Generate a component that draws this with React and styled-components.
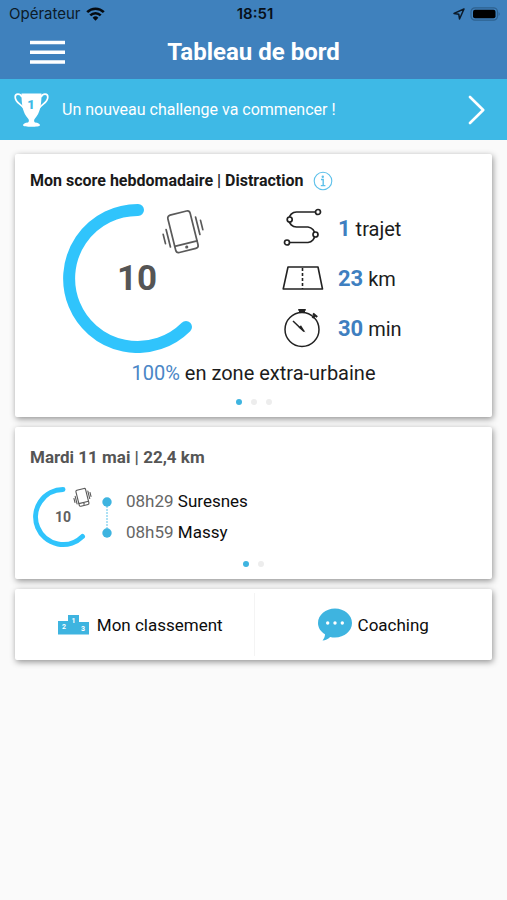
import React from "react";
import styled, { createGlobalStyle } from "styled-components";

const GlobalStyle = createGlobalStyle`
  *, *::before, *::after { box-sizing: border-box; }
  body {
    margin: 0;
    background: #fafafa;
    color: #1c1c1c;
    font-family: Roboto, "Liberation Sans", sans-serif;
  }
  button { font: inherit; color: inherit; border: 0; padding: 0; background: none; cursor: pointer; }
  h1, h2, p, ul, ol, dl, dd { margin: 0; padding: 0; }
  ul, ol { list-style: none; }
  svg { display: block; flex: none; }
`;

const Top = styled.header`
  background: #3f81bd;
`;

const StatusBar = styled.div`
  display: grid;
  grid-template-columns: 1fr auto 1fr;
  align-items: center;
  height: 27px;
  padding: 0 6px 0 9px;
  font-family: Inter, "Liberation Sans", sans-serif;
  font-size: 15px;
  color: #0c1a28;
`;

const StatusGroup = styled.div`
  display: flex;
  align-items: center;
  justify-content: ${(p) => p.$justify || "flex-start"};
  gap: 5px;
`;

const Clock = styled.time`
  font-weight: 600;
  color: #071019;
`;

const TitleBar = styled.div`
  display: grid;
  grid-template-columns: 36px 1fr 36px;
  align-items: center;
  height: 52px;
  padding: 0 29px;
  padding-bottom: 3px;
`;

const PageTitle = styled.h1`
  text-align: center;
  color: #fff;
  font-size: 24px;
  line-height: 28px;
  font-weight: 700;
`;

const Banner = styled.button`
  display: flex;
  align-items: center;
  gap: 13px;
  width: 100%;
  height: 61px;
  padding: 0 22px 0 14px;
  background: #3eb9e6;
  color: #fff;
  text-align: left;
  font-size: 16px;
`;

const BannerText = styled.span`
  flex: 1;
`;

const Main = styled.main`
  display: flex;
  flex-direction: column;
  gap: 10px;
  padding: 14px 15px;
`;

const Card = styled.section`
  background: #fff;
  border-radius: 2px;
  box-shadow: 1px 2px 6px rgba(0, 0, 0, 0.42);
  padding: ${(p) => p.$padding || "0"};
`;

const CardHeader = styled.div`
  display: flex;
  align-items: center;
  gap: 9px;
`;

const CardTitle = styled.h2`
  font-size: ${(p) => p.$size}px;
  line-height: 24px;
  font-weight: 700;
  color: ${(p) => p.$color};
`;

const Score = styled.div`
  display: grid;
  grid-template-columns: 205px 1fr;
  align-items: center;
  column-gap: 47px;
  margin-top: 10px;
`;

const ScoreGauge = styled.div`
  display: flex;
  align-items: flex-start;
  padding-left: 32px;
`;

const Stats = styled.ul`
  display: flex;
  flex-direction: column;
  gap: 6px;
`;

const Stat = styled.li`
  display: flex;
  align-items: center;
  gap: 14px;
  height: 44px;
  font-size: 20px;
`;

const StatValue = styled.strong`
  color: #3f7fc0;
  font-size: 22px;
  font-weight: 700;
`;

const Zone = styled.p`
  margin-top: 8px;
  text-align: center;
  font-size: 20px;
  line-height: 24px;
`;

const ZoneShare = styled.span`
  color: #4a86c6;
`;

const Pager = styled.div`
  display: flex;
  justify-content: center;
  gap: 9px;
  margin-top: ${(p) => p.$top}px;
`;

const PagerDot = styled.button`
  width: 6px;
  height: 6px;
  border-radius: 50%;
  background: ${(p) => (p.$active ? "#3eb4e0" : "#ededed")};
`;

const Trip = styled.div`
  display: flex;
  align-items: center;
  margin-top: 17px;
  padding-left: 3px;
`;

const Stops = styled.div`
  display: flex;
  align-items: center;
  gap: 14px;
  margin-left: 9px;
`;

const StopList = styled.ol`
  font-size: 17px;
  line-height: 31px;
  color: #0c0c0c;
`;

const StopTime = styled.time`
  color: #666;
`;

const Actions = styled.nav`
  display: grid;
  grid-template-columns: 1fr 1fr;
  padding: 4px 0;
`;

const Action = styled.button`
  display: flex;
  align-items: center;
  justify-content: center;
  gap: ${(p) => p.$gap}px;
  height: 63px;
  padding-left: ${(p) => p.$indent || 0}px;
  font-size: 17px;
  color: #0c0c0c;
  & + & { border-left: 1px solid #f4f4f4; }
`;

const WifiIcon = () => (
  <svg width="19" height="14" viewBox="0 0 19 14" fill="none" stroke="#050a10" strokeWidth="2.6" aria-hidden="true">
    <path d="M1.2 5.2a11.8 11.8 0 0 1 16.6 0" />
    <path d="M4.3 8.4a7.4 7.4 0 0 1 10.4 0" />
    <path d="M6.6 10.7a4.1 4.1 0 0 1 5.8 0L9.5 13.8z" fill="#050a10" stroke="none" />
  </svg>
);

const LocationIcon = () => (
  <svg width="12" height="12" viewBox="0 0 12 12" fill="none" stroke="#0c1a28" strokeWidth="1.5" strokeLinejoin="round" aria-hidden="true">
    <path d="M11 1 1 5.4l4.8.9.7 4.7z" />
  </svg>
);

const BatteryIcon = () => (
  <svg width="31" height="14" viewBox="0 0 31 14" aria-hidden="true">
    <rect x="1" y="0.8" width="26.500" height="12.400" rx="4" fill="none" stroke="#2e618f" strokeWidth="1.2" />
    <rect x="3" y="2.800" width="22.500" height="8.400" rx="2" fill="#000" />
    <path d="M28.700 5q2 2 0 4z" fill="#2e618f" />
  </svg>
);

const MenuIcon = () => (
  <svg width="36" height="26" viewBox="0 0 36 26" stroke="#fff" strokeWidth="3.600" aria-hidden="true">
    <path d="M1 3.500h35M1 13.200h35M1 23h35" />
  </svg>
);

const TrophyIcon = () => (
  <svg width="35" height="36" viewBox="0 0 35 36" aria-hidden="true">
    <g fill="none" stroke="#fff" strokeWidth="1.700">
      <path d="M8 5C6 1 1.200 1.500 1.200 5c0 6 5.800 6.500 9.800 12.500" />
      <path d="M27 5c2-4 6.800-3.500 6.800 0 0 6-5.800 6.500-9.800 12.500" />
    </g>
    <path fill="#fff" d="M7.500 1.500h20c0 12-1.500 19.500-6.500 25-1.200 1.300-1.200 3 0 4 3 .2 5 1.500 5 2.800 0 2-17 2-17 0 0-1.300 2-2.600 5-2.800 1.200-1 1.200-2.700 0-4-5-5.500-6.500-13-6.500-25z" />
    <text x="17" y="17" textAnchor="middle" fontSize="13" fontWeight="900" fill="#3eb9e6">1</text>
  </svg>
);

const ChevronIcon = () => (
  <svg width="17" height="30" viewBox="0 0 17 30" fill="none" stroke="#fff" strokeWidth="2.600" strokeLinecap="round" strokeLinejoin="round" aria-hidden="true">
    <path d="M2 2 15.200 15 2 28" />
  </svg>
);

const InfoIcon = () => (
  <svg width="20" height="20" viewBox="0 0 20 20" fill="none" stroke="#5cc0ea" aria-hidden="true">
    <circle cx="10" cy="10" r="8.800" strokeWidth="1.100" />
    <circle cx="9.800" cy="5.700" r="1.200" fill="#5cc0ea" stroke="none" />
    <path d="M8 8.500h2.200v6M7.800 14.600h4.600" strokeWidth="1.400" />
  </svg>
);

const PhoneShape = ({ width = 1.7 }) => (
  <g fill="none" stroke="#5a5a5a" strokeWidth={width} strokeLinecap="round" strokeLinejoin="round">
    <g transform="rotate(-14 22 22)">
      <rect x="10.500" y="2.500" width="23" height="38.500" rx="3" />
      <path d="M10.500 34h23" />
      <circle cx="22" cy="37.500" r="0.700" />
      <path d="M6.200 15.500v18M2.200 19.500v9.500M37.800 10.500v18M41.800 15v9.500" />
    </g>
  </g>
);

const Gauge = ({ score }) => (
  <svg width="144" height="150" viewBox="0 0 144 150" role="img" aria-label={`Score ${score}`} >
    <path d="M76 7A68.500 68.500 0 1 0 124 124" fill="none" stroke="#30c4fc" strokeWidth="12" strokeLinecap="round" />
    <text x="75" y="87" textAnchor="middle" fontSize="35" fontWeight="700" fill="#555">{score}</text>
    <g transform="translate(99 7)"><PhoneShape /></g>
  </svg>
);

const SmallGauge = ({ score }) => (
  <svg width="60" height="62" viewBox="0 0 60 62" role="img" aria-label={`Score ${score}`}>
    <path d="M30 3.500A27.500 27.500 0 1 0 49.500 50.500" fill="none" stroke="#30c4fc" strokeWidth="5" strokeLinecap="round" />
    <text x="30" y="36" textAnchor="middle" fontSize="14" fontWeight="700" fill="#606060">{score}</text>
    <g transform="translate(40 2) scale(0.430)"><PhoneShape width={2.6} /></g>
  </svg>
);

const RouteIcon = () => (
  <svg width="42" height="40" viewBox="0 0 42 40" fill="none" stroke="#222" strokeWidth="1.700" aria-hidden="true">
    <path d="M33.500 4H14.500A7.500 7.500 0 0 0 14.500 19H26A7.800 7.800 0 0 1 26 34.500H7.500" />
    <g fill="#fff">
      <circle cx="36" cy="4" r="2.500" />
      <circle cx="7.700" cy="11.500" r="2.500" />
      <circle cx="33.500" cy="26.500" r="2.500" />
      <circle cx="5" cy="34.500" r="2.500" />
    </g>
  </svg>
);

const RoadIcon = () => (
  <svg width="42" height="26" viewBox="0 0 42 26" fill="none" stroke="#222" strokeWidth="1.600" strokeLinejoin="round" aria-hidden="true">
    <path d="M6 2h30l4.500 22H1.200z" />
    <path d="M20.500 3v21" strokeDasharray="3 2" />
  </svg>
);

const TimerIcon = () => (
  <svg width="42" height="42" viewBox="0 0 42 42" fill="none" stroke="#222" aria-hidden="true">
    <circle cx="20" cy="22.500" r="17" strokeWidth="1.500" />
    <path d="M16.500 2.500h7l-1.500 3h-4z" fill="#222" />
    <path d="m31 6.500 4.200 3.500M33 8l-2.500 3" strokeWidth="2.200" />
    <path d="m11 14 11 10.500" strokeWidth="1.500" />
    <path d="m16.500 20.500 2.500-2.300 4.500 7.400z" fill="#222" stroke="none" />
  </svg>
);

const TimelineIcon = () => (
  <svg width="10" height="41" viewBox="0 0 10 41" aria-hidden="true">
    <path d="M5 9v24" stroke="#5cc3ea" strokeWidth="1" strokeDasharray="2 1" />
    <circle cx="5" cy="5" r="4.700" fill="#3eb4e0" />
    <circle cx="5" cy="36" r="4.700" fill="#3eb4e0" />
  </svg>
);

const PodiumIcon = () => (
  <svg width="31" height="21" viewBox="0 0 31 21" aria-hidden="true">
    <path fill="#3eb4e0" d="M0 7h10V1h11v7h10v12.500H0z" />
    <g fill="#fff" fontSize="7" fontWeight="700" textAnchor="middle">
      <text x="6" y="14.500">2</text>
      <text x="15.500" y="9">1</text>
      <text x="25" y="17">3</text>
    </g>
  </svg>
);

const ChatIcon = () => (
  <svg width="34" height="33" viewBox="0 0 34 33" aria-hidden="true">
    <path fill="#3eb4e0" d="M17 .5c9.400 0 17 6.500 17 14.500s-7.600 14.500-17 14.500c-1.700 0-3.300-.2-4.800-.6C9.800 31 7.500 32.500 4.500 32.500c1.500-2 2.600-4 2.500-6.200C2.700 23.700 0 19.600 0 15 0 7 7.600.5 17 .5z" />
    <g fill="#fff">
      <circle cx="9.700" cy="15" r="1.700" />
      <circle cx="17" cy="15" r="1.700" />
      <circle cx="24.300" cy="15" r="1.700" />
    </g>
  </svg>
);

const PageDots = ({ count, top, label }) => (
  <Pager $top={top} role="group" aria-label={label}>
    {Array.from({ length: count }, (_, i) => (
      <PagerDot key={i} $active={i === 0} aria-label={`Page ${i + 1}`} />
    ))}
  </Pager>
);

const stats = [
  { icon: RouteIcon, value: "1", unit: "trajet" },
  { icon: RoadIcon, value: "23", unit: "km" },
  { icon: TimerIcon, value: "30", unit: "min" },
];

const stops = [
  { time: "08h29", city: "Suresnes" },
  { time: "08h59", city: "Massy" },
];

export default function App() {
  return (
    <>
      <GlobalStyle />
      <Top>
        <StatusBar>
          <StatusGroup>
            <span>Opérateur</span>
            <WifiIcon />
          </StatusGroup>
          <Clock>18:51</Clock>
          <StatusGroup $justify="flex-end">
            <LocationIcon />
            <BatteryIcon />
          </StatusGroup>
        </StatusBar>
        <TitleBar>
          <button aria-label="Menu"><MenuIcon /></button>
          <PageTitle>Tableau de bord</PageTitle>
        </TitleBar>
      </Top>
      <Banner>
        <TrophyIcon />
        <BannerText>Un nouveau challenge va commencer !</BannerText>
        <ChevronIcon />
      </Banner>
      <Main>
        <Card $padding="15px 15px 12px">
          <CardHeader>
            <CardTitle $size={16} $color="#1a1a1a">Mon score hebdomadaire | Distraction</CardTitle>
            <button aria-label="Informations"><InfoIcon /></button>
          </CardHeader>
          <Score>
            <ScoreGauge><Gauge score={10} /></ScoreGauge>
            <Stats>
              {stats.map(({ icon: Icon, value, unit }) => (
                <Stat key={unit}>
                  <Icon />
                  <span><StatValue>{value}</StatValue> {unit}</span>
                </Stat>
              ))}
            </Stats>
          </Score>
          <Zone><ZoneShare>100%</ZoneShare> en zone extra-urbaine</Zone>
          <PageDots count={3} top={14} label="Pages du score" />
        </Card>
        <Card $padding="18px 15px 12px">
          <CardTitle $size={17} $color="#555">Mardi 11 mai | 22,4 km</CardTitle>
          <Trip>
            <SmallGauge score={10} />
            <Stops>
              <TimelineIcon />
              <StopList>
                {stops.map((stop) => (
                  <li key={stop.time}><StopTime>{stop.time}</StopTime> {stop.city}</li>
                ))}
              </StopList>
            </Stops>
          </Trip>
          <PageDots count={2} top={13} label="Pages des trajets" />
        </Card>
        <Card>
          <Actions aria-label="Raccourcis">
            <Action $gap={8} $indent={12}><PodiumIcon />Mon classement</Action>
            <Action $gap={6}><ChatIcon />Coaching</Action>
          </Actions>
        </Card>
      </Main>
    </>
  );
}
